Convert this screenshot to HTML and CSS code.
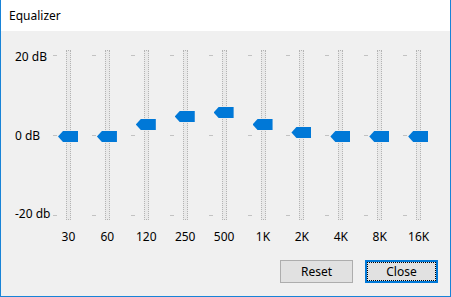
FILE: index.html
```html
<!DOCTYPE html>
<html lang="en">
<head>
    <meta charset="UTF-8">
    <title>Equalizer</title>
    <link rel="stylesheet" href="styles.css">
</head>
<body>
    <div class="window">
        <div class="titlebar">Equalizer</div>
        <div class="content">
            <div class="bands">
                <div class="scale">
                    <span>20 dB</span>
                    <span>0 dB</span>
                    <span>-20 db</span>
                </div>
                <div class="band">
                    <div class="slider">
                        <div class="ticks"><i></i><i></i><i></i></div>
                        <div class="track"><div class="thumb" style="top: 80px"></div></div>
                    </div>
                    <div class="freq">30</div>
                </div>
                <div class="band">
                    <div class="slider">
                        <div class="ticks"><i></i><i></i><i></i></div>
                        <div class="track"><div class="thumb" style="top: 80px"></div></div>
                    </div>
                    <div class="freq">60</div>
                </div>
                <div class="band">
                    <div class="slider">
                        <div class="ticks"><i></i><i></i><i></i></div>
                        <div class="track"><div class="thumb" style="top: 68px"></div></div>
                    </div>
                    <div class="freq">120</div>
                </div>
                <div class="band">
                    <div class="slider">
                        <div class="ticks"><i></i><i></i><i></i></div>
                        <div class="track"><div class="thumb" style="top: 60px"></div></div>
                    </div>
                    <div class="freq">250</div>
                </div>
                <div class="band">
                    <div class="slider">
                        <div class="ticks"><i></i><i></i><i></i></div>
                        <div class="track"><div class="thumb" style="top: 56px"></div></div>
                    </div>
                    <div class="freq">500</div>
                </div>
                <div class="band">
                    <div class="slider">
                        <div class="ticks"><i></i><i></i><i></i></div>
                        <div class="track"><div class="thumb" style="top: 68px"></div></div>
                    </div>
                    <div class="freq">1K</div>
                </div>
                <div class="band">
                    <div class="slider">
                        <div class="ticks"><i></i><i></i><i></i></div>
                        <div class="track"><div class="thumb" style="top: 76px"></div></div>
                    </div>
                    <div class="freq">2K</div>
                </div>
                <div class="band">
                    <div class="slider">
                        <div class="ticks"><i></i><i></i><i></i></div>
                        <div class="track"><div class="thumb" style="top: 80px"></div></div>
                    </div>
                    <div class="freq">4K</div>
                </div>
                <div class="band">
                    <div class="slider">
                        <div class="ticks"><i></i><i></i><i></i></div>
                        <div class="track"><div class="thumb" style="top: 80px"></div></div>
                    </div>
                    <div class="freq">8K</div>
                </div>
                <div class="band">
                    <div class="slider">
                        <div class="ticks"><i></i><i></i><i></i></div>
                        <div class="track"><div class="thumb" style="top: 80px"></div></div>
                    </div>
                    <div class="freq">16K</div>
                </div>
            </div>
            <div class="buttons">
                <button class="btn">Reset</button>
                <button class="btn default">Close</button>
            </div>
        </div>
    </div>
</body>
</html>
```
FILE: styles.css
```css
* {
    margin: 0;
    padding: 0;
    box-sizing: border-box;
}

body {
    font-family: 'Noto Sans', 'Open Sans', sans-serif;
    font-size: 12px;
    color: #000;
    background: #fff;
}

.window {
    width: 451px;
    height: 297px;
    border: 1px solid #1883d7;
    border-top: none;
    background: #f0f0f0;
    display: flex;
    flex-direction: column;
}

.titlebar {
    height: 31px;
    line-height: 31px;
    padding-left: 8px;
    background: #fff;
}

.content {
    flex: 1;
    display: flex;
    flex-direction: column;
    padding: 19px 12px 13px 0;
}

.bands {
    display: flex;
    align-items: flex-start;
}

.scale {
    width: 48px;
    height: 171px;
    padding-left: 14px;
    display: flex;
    flex-direction: column;
    justify-content: space-between;
    line-height: 14px;
    white-space: nowrap;
}

.band {
    width: 39px;
    display: flex;
    flex-direction: column;
}

.slider {
    height: 170px;
    display: flex;
    padding-left: 4px;
}

.ticks {
    width: 4px;
    margin-right: 9px;
    padding: 5px 0 4px;
    display: flex;
    flex-direction: column;
    justify-content: space-between;
}

.ticks i {
    display: block;
    height: 1px;
    background: #c2c2c2;
}

.track {
    position: relative;
    width: 5px;
    border: 1px dotted #b4b4b4;
    background: #e9e9e9;
}

.thumb {
    position: absolute;
    left: -9px;
    width: 20px;
    height: 11px;
    background: #0078d7;
    clip-path: polygon(0 50%, 5px 0, 100% 0, 100% 100%, 5px 100%);
}

.freq {
    margin-top: 10px;
    line-height: 14px;
    text-align: center;
}

.buttons {
    margin-top: auto;
    display: flex;
    justify-content: flex-end;
    gap: 12px;
}

.btn {
    width: 73px;
    height: 23px;
    font-family: inherit;
    font-size: 12px;
    color: #000;
    background: #e1e1e1;
    border: 1px solid #adadad;
}

.btn.default {
    border: 2px solid #0078d7;
    outline: 1px dotted #000;
    outline-offset: -3px;
}
```
